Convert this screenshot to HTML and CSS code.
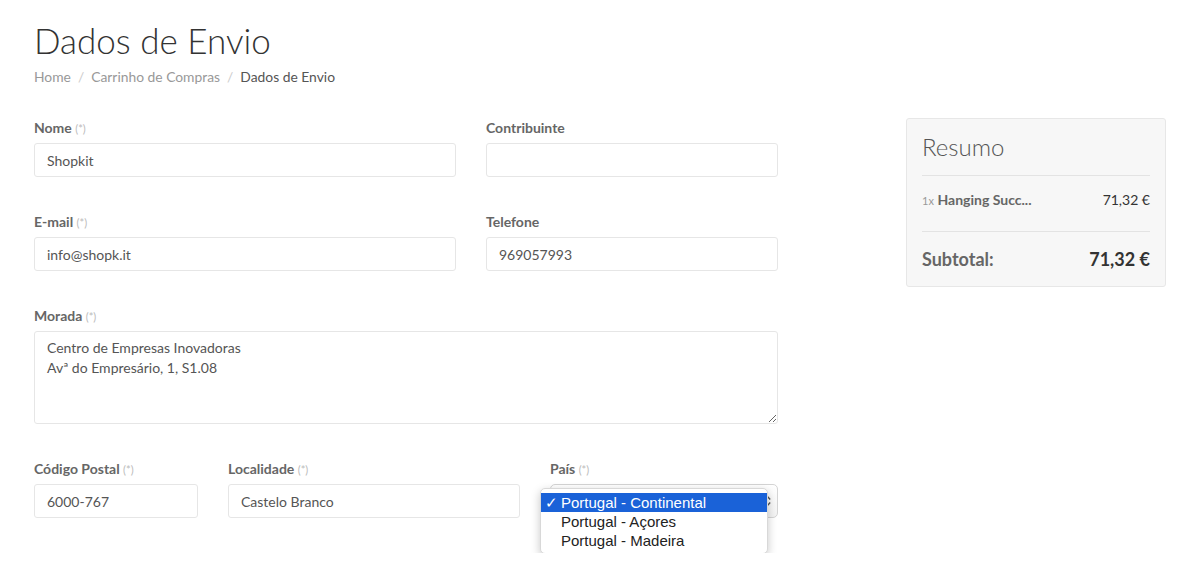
FILE: index.html
```html
<!DOCTYPE html>
<html lang="pt">
<head>
  <meta charset="UTF-8" />
  <meta name="viewport" content="width=device-width, initial-scale=1.0" />
  <title>Dados de Envio</title>
  <link rel="stylesheet" href="styles.css">
</head>
<body>
  <div class="page">
    <h1>Dados de Envio</h1>
    <ol class="breadcrumb">
      <li><a href="#">Home</a></li>
      <li><a href="#">Carrinho de Compras</a></li>
      <li class="active">Dados de Envio</li>
    </ol>

    <div class="layout">
      <form class="shipping">
        <div class="row row-top">
          <div class="field">
            <label>Nome <span class="req">(*)</span></label>
            <input type="text" value="Shopkit" />
          </div>
          <div class="field">
            <label>Contribuinte</label>
            <input type="text" value="" />
          </div>
        </div>
        <div class="row row-top">
          <div class="field">
            <label>E-mail <span class="req">(*)</span></label>
            <input type="text" value="info@shopk.it" />
          </div>
          <div class="field">
            <label>Telefone</label>
            <input type="text" value="969057993" />
          </div>
        </div>
        <div class="field">
          <label>Morada <span class="req">(*)</span></label>
          <textarea rows="4">Centro de Empresas Inovadoras
Avª do Empresário, 1, S1.08</textarea>
        </div>
        <div class="row row-bottom">
          <div class="field">
            <label>Código Postal <span class="req">(*)</span></label>
            <input type="text" value="6000-767" />
          </div>
          <div class="field">
            <label>Localidade <span class="req">(*)</span></label>
            <input type="text" value="Castelo Branco" />
          </div>
          <div class="field country">
            <label>País <span class="req">(*)</span></label>
            <div class="select">
              <svg class="select-arrows" width="7" height="12" viewBox="0 0 7 12">
                <path d="M0.8 4.4 L3.5 1.6 L6.2 4.4" fill="none" stroke="#555" stroke-width="1.4" />
                <path d="M0.8 7.6 L3.5 10.4 L6.2 7.6" fill="none" stroke="#555" stroke-width="1.4" />
              </svg>
            </div>
            <ul class="select-menu">
              <li class="selected"><span class="check">✓</span>Portugal - Continental</li>
              <li><span class="check"></span>Portugal - Açores</li>
              <li><span class="check"></span>Portugal - Madeira</li>
            </ul>
          </div>
        </div>
      </form>

      <aside class="summary">
        <h3>Resumo</h3>
        <div class="summary-item">
          <span class="item-name"><small>1x</small> <strong>Hanging Succ...</strong></span>
          <span class="item-price">71,32 €</span>
        </div>
        <div class="summary-total">
          <span>Subtotal:</span>
          <span class="total-price">71,32 €</span>
        </div>
      </aside>
    </div>
  </div>
</body>
</html>
```

FILE: styles.css
```css
body {
  margin: 0;
  background: #fff;
  font-family: "Lato", "Open Sans", sans-serif;
  font-size: 14px;
  line-height: 20px;
  color: #555;
}
.page {
  padding: 20px 34px 0;
}
h1 {
  margin: 0;
  font-size: 35px;
  font-weight: 300;
  line-height: 40px;
  color: #333;
}
.breadcrumb {
  list-style: none;
  margin: 7px 0 0;
  padding: 0;
  display: flex;
  font-size: 13.85px;
}
.breadcrumb li + li::before {
  content: "/";
  padding: 0 7px;
  color: #ccc;
}
.breadcrumb a {
  color: #999;
  text-decoration: none;
}
.breadcrumb .active {
  color: #555;
}
.layout {
  display: flex;
  align-items: flex-start;
  margin-top: 31px;
}
.shipping {
  width: 744px;
}
.row {
  display: grid;
  column-gap: 30px;
}
.row-top {
  grid-template-columns: 422px 292px;
}
.row-bottom {
  grid-template-columns: 164px 292px 228px;
}
.field {
  margin-bottom: 35px;
}
.field label {
  display: block;
  height: 20px;
  margin-bottom: 5px;
  font-weight: 700;
  color: #666;
}
.req {
  font-size: 11px;
  font-weight: 400;
  line-height: 1;
  color: #bbb;
}
input, textarea {
  display: block;
  width: 100%;
  box-sizing: border-box;
  height: 34px;
  margin: 0;
  padding: 6px 12px;
  border: 1px solid #e6e6e6;
  border-radius: 3px;
  font-family: "Lato", "Open Sans", sans-serif;
  font-size: 14px;
  line-height: 20px;
  color: #555;
  background: #fff;
  outline: none;
}
textarea {
  height: 93px;
  resize: vertical;
}
.country {
  position: relative;
}
.select {
  display: flex;
  align-items: center;
  justify-content: flex-end;
  box-sizing: border-box;
  height: 34px;
  padding: 0 6px 0 10px;
  border: 1px solid #d4d4d4;
  border-radius: 5px;
  background: linear-gradient(#fff, #f3f3f3);
}
.select-menu {
  position: absolute;
  left: -10px;
  top: 29px;
  box-sizing: border-box;
  width: 228px;
  margin: 0;
  padding: 4px 0 3px;
  list-style: none;
  background: #fff;
  border: 1px solid #d8d8d8;
  border-radius: 5px;
  box-shadow: 0 3px 10px rgba(0,0,0,0.22);
  font-family: "Liberation Sans", Arial, sans-serif;
  font-size: 15px;
  line-height: 19px;
  color: #222;
}
.select-menu li {
  display: flex;
  padding: 0 4px;
}
.select-menu .selected {
  background: #1a62d8;
  color: #fff;
}
.check {
  width: 16px;
}
.summary {
  box-sizing: border-box;
  width: 260px;
  margin: 0 0 0 128px;
  padding: 15px 15px 16px;
  background: #f7f7f7;
  border: 1px solid #e7e7e7;
  border-radius: 3px;
}
.summary h3 {
  margin: 0 0 15px;
  font-size: 24px;
  font-weight: 300;
  line-height: 1.1;
  color: #555;
}
.summary-item {
  display: flex;
  justify-content: space-between;
  padding: 14px 0 20px;
  border-top: 1px solid #e3e3e3;
  border-bottom: 1px solid #e3e3e3;
}
.item-name small {
  font-size: 11px;
  color: #999;
}
.item-name strong {
  color: #666;
}
.item-price {
  color: #333;
}
.summary-total {
  display: flex;
  justify-content: space-between;
  padding-top: 18px;
  font-size: 18px;
  font-weight: 700;
  line-height: 1.1;
  color: #666;
}
.total-price {
  color: #333;
}
```
